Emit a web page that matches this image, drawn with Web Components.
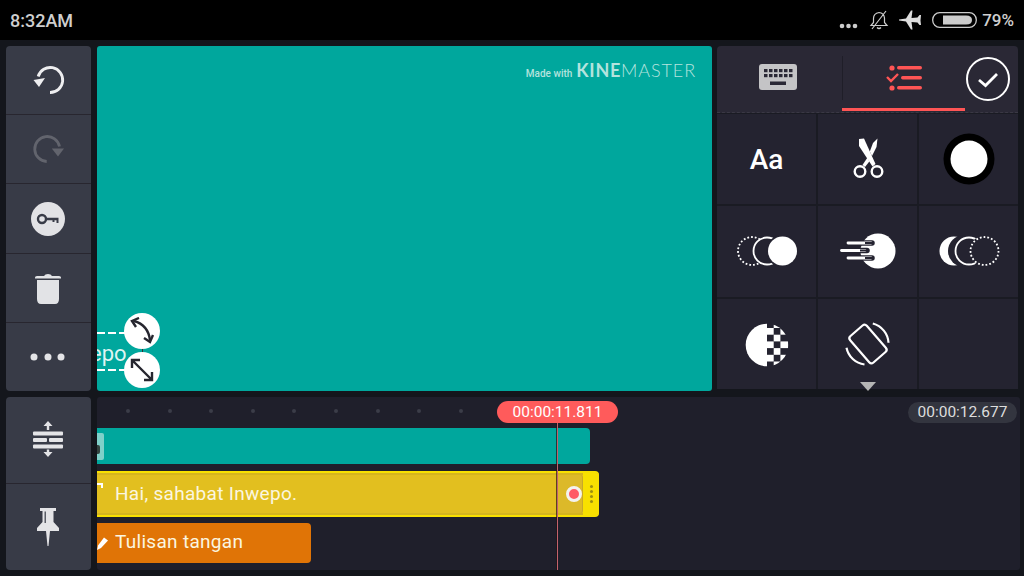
<!DOCTYPE html>
<html>
<head>
<meta charset="utf-8">
<title>KineMaster</title>
<style>
  html, body { margin: 0; padding: 0; background: #14161c; }
  body { width: 1024px; height: 576px; overflow: hidden; font-family: Roboto, "Liberation Sans", sans-serif; }
  svg { display: block; }
</style>
</head>
<body>

<km-app>
  <status-bar slot="status"></status-bar>

  <tool-rail slot="rail">
    <rail-button>
      <svg width="34" height="34" viewBox="0 0 34 34"><path d="M19 29.500A12.500 12.500 0 1 0 7.200 13.500" fill="none" stroke="#eeeef0" stroke-width="2.800"/><path d="M2.500 17L14 15L8 24Z" fill="#eeeef0"/></svg>
    </rail-button>
    <rail-button>
      <svg width="34" height="34" viewBox="0 0 34 34"><path d="M15.700 29.500A12.500 12.500 0 1 1 28.500 14.500" fill="none" stroke="#62646d" stroke-width="2.800"/><path d="M20.800 16.500L33 16.500L27 24.500Z" fill="#62646d"/></svg>
    </rail-button>
    <rail-button>
      <svg width="34" height="34" viewBox="0 0 34 34"><circle cx="17" cy="17" r="17" fill="#e2e2e5"/><circle cx="11" cy="17" r="4" fill="none" stroke="#383b47" stroke-width="2.400"/><path d="M15 15.800H27.500V21H25.500V18.200H23.500V20H21.500V18.200H15Z" fill="#383b47"/></svg>
    </rail-button>
    <rail-button>
      <svg width="28" height="32" viewBox="0 0 28 32"><path d="M1 5.500Q1 4 3 4H10Q11 2 14 2Q17 2 18 4H25Q27 4 27 5.500V6.500H1Z" fill="#e2e3e6"/><path d="M3 8H25V27Q25 32 21 32H7Q3 32 3 27Z" fill="#e2e3e6"/></svg>
    </rail-button>
    <rail-button>
      <svg width="36" height="8" viewBox="0 0 36 8"><circle cx="4" cy="4" r="3.500" fill="#e4e4e7"/><circle cx="18" cy="4" r="3.500" fill="#e4e4e7"/><circle cx="31" cy="4" r="3.500" fill="#e4e4e7"/></svg>
    </rail-button>
  </tool-rail>

  <preview-pane slot="preview"></preview-pane>

  <option-panel slot="options">
    <option-cell><span style="font:500 28px Roboto, sans-serif;color:#fff">Aa</span></option-cell>
    <option-cell>
      <svg width="32" height="42" viewBox="0 0 32 42"><g fill="none" stroke="#fff" stroke-width="2.400"><circle cx="8" cy="33.500" r="5.300"/><circle cx="25" cy="33.500" r="5.300"/></g><path d="M7 1L12 0.500L23.500 26L20.500 28.500L7 8Z" fill="#fff"/><path d="M25.500 0.500L24.500 9L20 18L17.800 13.500L21 5Z" fill="#fff"/><path d="M15.500 19.500L17.300 23.500L13 29L10.500 27Z" fill="#fff"/></svg>
    </option-cell>
    <option-cell>
      <svg width="52" height="52" viewBox="0 0 52 52"><circle cx="26" cy="26" r="25.500" fill="#000"/><circle cx="26" cy="26" r="18.500" fill="#fff"/></svg>
    </option-cell>
    <option-cell>
      <svg width="62" height="32" viewBox="0 0 62 32"><circle cx="16" cy="16" r="14" fill="none" stroke="#fff" stroke-width="1.800" stroke-dasharray="1.800 2"/><circle cx="31" cy="16" r="13.500" fill="#242330" stroke="#fff" stroke-width="1.800"/><circle cx="46" cy="16" r="16" fill="#242330"/><circle cx="46.500" cy="16" r="14.500" fill="#fff"/></svg>
    </option-cell>
    <option-cell>
      <svg width="56" height="38" viewBox="0 0 56 38"><circle cx="38" cy="19" r="17.500" fill="#fff"/><g stroke="#242330" stroke-width="5.500" stroke-linecap="round"><path d="M8 11H32"/><path d="M3 18.500H27"/><path d="M8 26H32"/></g><g stroke="#fff" stroke-width="2.800" stroke-linecap="round"><path d="M8 11H31"/><path d="M1.500 18.500H25"/><path d="M8 26H31"/></g><g stroke="#242330" stroke-width="2"><path d="M25 11H33"/><path d="M20 18.500H28"/><path d="M25 26H33"/></g></svg>
    </option-cell>
    <option-cell>
      <svg width="62" height="32" viewBox="0 0 62 32"><circle cx="16" cy="16" r="14.500" fill="#fff"/><circle cx="26" cy="16" r="16" fill="#242330"/><circle cx="31" cy="16" r="13.500" fill="#242330" stroke="#fff" stroke-width="1.800"/><circle cx="46" cy="16" r="15" fill="#242330"/><circle cx="46.500" cy="16" r="14" fill="#242330" stroke="#fff" stroke-width="1.800" stroke-dasharray="1.800 2"/></svg>
    </option-cell>
    <option-cell>
      <svg width="44" height="44" viewBox="0 0 44 44" style="margin-top:2px"><defs><clipPath id="alphaClip"><circle cx="22" cy="22" r="21.300"/></clipPath></defs><g clip-path="url(#alphaClip)" fill="#fff"><rect x="0" y="0" width="22" height="44"/><rect x="22" y="5" width="6.700" height="6.700"/><rect x="22" y="18.400" width="6.700" height="6.700"/><rect x="22" y="31.800" width="6.700" height="6.700"/><rect x="28.700" y="-1.700" width="6.700" height="6.700"/><rect x="28.700" y="11.700" width="6.700" height="6.700"/><rect x="28.700" y="25.100" width="6.700" height="6.700"/><rect x="28.700" y="38.500" width="6.700" height="6.700"/><rect x="35.400" y="5" width="8" height="6.700"/><rect x="35.400" y="18.400" width="8" height="6.700"/><rect x="35.400" y="31.800" width="8" height="6.700"/></g></svg>
    </option-cell>
    <option-cell>
      <svg width="46" height="46" viewBox="0 0 46 46"><rect x="12" y="5.500" width="22" height="35" rx="3" transform="rotate(-41 23 23)" fill="none" stroke="#fff" stroke-width="2.200"/><path d="M27.800 2.500A21 21 0 0 1 43.500 21.800" fill="none" stroke="#fff" stroke-width="2.200"/><path d="M19.500 43.500A21 21 0 0 1 1.500 26.800" fill="none" stroke="#fff" stroke-width="2.200"/></svg>
    </option-cell>
    <option-cell></option-cell>
  </option-panel>

  <tool-rail slot="rail2">
    <rail-button>
      <svg width="32" height="38" viewBox="0 0 32 38"><g fill="#e4e4e7"><path d="M16 0L20.500 5H17.200V9H14.800V5H11.500Z"/><rect x="1" y="10.500" width="30" height="4" rx="1"/><rect x="1" y="17" width="14" height="4" rx="1"/><rect x="17" y="17" width="14" height="4" rx="1"/><rect x="1" y="23.500" width="30" height="4" rx="1"/><path d="M16 36L20.500 31H17.200V28.500H14.800V31H11.500Z"/></g></svg>
    </rail-button>
    <rail-button>
      <svg width="24" height="38" viewBox="0 0 24 38"><path d="M4 0H20V3H17.500V14L23 20V23H14L12.500 38H11.500L10 23H1V20L6.500 14V3H4Z" fill="#e4e4e7"/><path d="M9.200 3.500V15" stroke="#383b47" stroke-width="1.200"/></svg>
    </rail-button>
  </tool-rail>

  <timeline-pane slot="timeline">
    <timeline-clip kind="video" width="493"></timeline-clip>
    <timeline-clip kind="text" width="502">Hai, sahabat Inwepo.</timeline-clip>
    <timeline-clip kind="hand" width="214">Tulisan tangan</timeline-clip>
  </timeline-pane>
</km-app>

<script>
class KmApp extends HTMLElement {
    constructor() {
        super();
        this.shadowDom = this.attachShadow({ mode: 'open' });
        this.shadowDom.innerHTML = `
        <style>
            :host { display: flex; flex-direction: column; width: 1024px; height: 576px; }
            .body {
                display: grid;
                grid-template-columns: 85px 615px 301px;
                grid-template-rows: 345px 173px;
                column-gap: 6px;
                row-gap: 6px;
                padding: 6px;
            }
            .options { margin-left: -1px; width: 301px; }
            .timeline { grid-column: 2 / 4; margin-right: -1px; }
        </style>
        <slot name="status"></slot>
        <div class="body">
            <div><slot name="rail"></slot></div>
            <div><slot name="preview"></slot></div>
            <div class="options"><slot name="options"></slot></div>
            <div><slot name="rail2"></slot></div>
            <div class="timeline"><slot name="timeline"></slot></div>
        </div>
        `;
    }
}

class StatusBar extends HTMLElement {
    constructor() {
        super();
        this.shadowDom = this.attachShadow({ mode: 'open' });
        this.shadowDom.innerHTML = `
        <style>
            :host {
                display: flex; align-items: center; height: 40px; background: #000;
                padding: 0 10px; box-sizing: border-box; color: #cfcfcf;
                font: 500 17px Roboto, sans-serif;
            }
            .clock { font-size: 18px; }
            .right { margin-left: auto; display: flex; align-items: center; }
            .pct { margin-left: 5px; }
            svg { display: block; }
        </style>
        <span class="clock">8:32AM</span>
        <div class="right">
            <svg width="19" height="6" viewBox="0 0 19 6" style="margin-top:12px"><circle cx="3" cy="3" r="2.300" fill="#ccc"/><circle cx="9.500" cy="3" r="2.300" fill="#ccc"/><circle cx="16" cy="3" r="2.300" fill="#ccc"/></svg>
            <svg width="20" height="20" viewBox="0 0 20 20" style="margin-left:11px"><path d="M2 15.500L4.500 12.500V8.500Q4.500 3.500 10 2.500Q15 3 15.500 8V12.500L18 15.500ZM8 17.500Q10 19.500 12 17.500M3 19L17 1" fill="none" stroke="#ccc" stroke-width="1.200"/></svg>
            <svg width="23" height="20" viewBox="0 0 23 20" style="margin-left:10px"><path d="M0 9.500L7 8.500L12 0.500H13.500L12.500 8L18.500 7.500L20.500 5H22L21.500 10.500L22 15H20.500L18.500 12.500L12.500 12L13.500 19.500H12L7 11.500L0 10.500Z" fill="#ddd"/></svg>
            <svg width="45" height="16" viewBox="0 0 45 16" style="margin-left:10px"><rect x="0.700" y="0.700" width="43.600" height="14.600" rx="7" fill="none" stroke="#ccc" stroke-width="1.300"/><path d="M11 3.500H34Q40 3.500 40 8Q40 12.500 34 12.500H11Z" fill="#ccc"/></svg>
            <span class="pct">79%</span>
        </div>
        `;
    }
}

class ToolRail extends HTMLElement {
    constructor() {
        super();
        this.shadowDom = this.attachShadow({ mode: 'open' });
        this.shadowDom.innerHTML = `
        <style>
            :host {
                display: flex; flex-direction: column; height: 100%; border-radius: 4px; overflow: hidden;
                background: #383b47;
            }
        </style>
        <slot></slot>
        `;
    }
}

class RailButton extends HTMLElement {
    constructor() {
        super();
        this.shadowDom = this.attachShadow({ mode: 'open' });
        this.shadowDom.innerHTML = `
        <style>
            :host {
                flex: 1; display: flex; align-items: center; justify-content: center;
                border-bottom: 1px solid #28262f; box-sizing: border-box; padding-right: 1px;
            }
            :host(:last-child) { border-bottom: 0; }
        </style>
        <slot></slot>
        `;
    }
}

class PreviewPane extends HTMLElement {
    constructor() {
        super();
        this.shadowDom = this.attachShadow({ mode: 'open' });
        this.shadowDom.innerHTML = `
        <style>
            :host {
                display: block; position: relative; height: 100%; overflow: hidden;
                background: #00a79d; border-radius: 3px;
                font-family: Roboto, sans-serif;
            }
            .mark {
                position: absolute; right: 16px; top: 13px; display: flex; align-items: baseline;
                color: #b4e3de; white-space: nowrap;
            }
            .made { font: 500 10px Roboto, sans-serif; margin-right: 4px; }
            .kine { font: 700 18px Lato, sans-serif; letter-spacing: .7px; }
            .master { font: 300 18px Lato, sans-serif; letter-spacing: .9px; }
            .txt { position: absolute; left: -7px; top: 295px; font-size: 22px; color: #dff4f2; white-space: nowrap; }
            .dash {
                position: absolute; left: 0; width: 30px; height: 2px;
                background: repeating-linear-gradient(90deg, #fff 0 8px, transparent 8px 11px);
            }
            .stem { position: absolute; left: 45px; top: 300px; height: 24px; border-left: 1px solid #333; }
            .handle {
                position: absolute; left: 27px; width: 36px; height: 36px; border-radius: 50%;
                background: #fff; display: flex; align-items: center; justify-content: center;
            }
        </style>
        <div class="mark"><span class="made">Made with</span><span class="kine">KINE</span><span class="master">MASTER</span></div>
        <span class="txt">epo</span>
        <div class="dash" style="top:286px"></div>
        <div class="dash" style="top:323px"></div>
        <div class="stem"></div>
        <div class="handle" style="top:267px">
            <svg width="26" height="28" viewBox="0 0 26 28"><path d="M5 4Q19 8 21 23" fill="none" stroke="#26262f" stroke-width="2.400"/><path d="M10 1L3 4L7 10M15 21L21 25L24 18" fill="none" stroke="#26262f" stroke-width="2.400"/></svg>
        </div>
        <div class="handle" style="top:306px">
            <svg width="26" height="26" viewBox="0 0 26 26"><path d="M4 4L22 22M3 11V3H11M23 15V23H15" fill="none" stroke="#26262f" stroke-width="2.400"/></svg>
        </div>
        `;
    }
}

class OptionPanel extends HTMLElement {
    constructor() {
        super();
        this.shadowDom = this.attachShadow({ mode: 'open' });
        this.shadowDom.innerHTML = `
        <style>
            :host { display: flex; flex-direction: column; height: 343px; position: relative; }
            .tabs {
                display: flex; height: 66px; background: #2a2835; border-radius: 4px 4px 0 0;
                border-bottom: 1px dashed #3a3844; box-sizing: content-box; position: relative;
            }
            .tab { display: flex; align-items: center; justify-content: center; box-sizing: border-box; }
            .kb { width: 125px; padding-right: 3px; margin-top: -1px; }
            .kb svg { margin-top: -4px; }
            .list { width: 123px; border-left: 1px solid #1f1e28; height: 44px; margin-top: 10px; position: relative; }
            .line { width: 123px; height: 3px; background: #ff5555; position: absolute; left: 125px; top: 62px; }
            .ok { position: absolute; left: 249px; top: 11px; width: 44px; height: 44px; }
            .grid {
                display: grid; grid-template-columns: repeat(3, 1fr); grid-auto-rows: 1fr; gap: 2px;
                flex: 1; padding-top: 1px; background: #1a1b23;
            }
            .more {
                position: absolute; left: 143px; bottom: -2px; width: 0; height: 0;
                border-left: 8.500px solid transparent; border-right: 8.500px solid transparent;
                border-top: 9px solid #b5b5b5;
            }
            svg { display: block; }
        </style>
        <div class="tabs">
            <div class="tab kb">
                <svg width="38" height="26" viewBox="0 0 38 26"><rect width="38" height="26" rx="3" fill="#c4c4c6"/><g fill="#2a2835"><rect x="5" y="5" width="3.500" height="3.200"/><rect x="10" y="5" width="3.500" height="3.200"/><rect x="15" y="5" width="3.500" height="3.200"/><rect x="20" y="5" width="3.500" height="3.200"/><rect x="25" y="5" width="3.500" height="3.200"/><rect x="30" y="5" width="3.500" height="3.200"/><rect x="5" y="10" width="3.500" height="3.200"/><rect x="10" y="10" width="3.500" height="3.200"/><rect x="15" y="10" width="3.500" height="3.200"/><rect x="20" y="10" width="3.500" height="3.200"/><rect x="25" y="10" width="3.500" height="3.200"/><rect x="30" y="10" width="3.500" height="3.200"/><rect x="11" y="17.500" width="16" height="3.500"/></g></svg>
            </div>
            <div class="tab list">
                <svg width="36" height="26" viewBox="0 0 36 26"><g fill="#ff5555"><circle cx="6" cy="3" r="2.600"/><rect x="11" y="1" width="25" height="3.400" rx="1.700"/><rect x="15" y="11" width="21" height="3.400" rx="1.700"/><circle cx="6" cy="23" r="2.600"/><rect x="11" y="21" width="25" height="3.400" rx="1.700"/></g><path d="M1 12L5 16L12 9" fill="none" stroke="#ff5555" stroke-width="2.400"/></svg>
            </div>
            <div class="line"></div>
            <svg class="ok" viewBox="0 0 44 44"><circle cx="22" cy="22" r="21" fill="none" stroke="#fff" stroke-width="2"/><path d="M13 23L19.500 28.500L31 17" fill="none" stroke="#fff" stroke-width="2.800"/></svg>
        </div>
        <div class="grid"><slot></slot></div>
        <div class="more"></div>
        `;
    }
}

class OptionCell extends HTMLElement {
    constructor() {
        super();
        this.shadowDom = this.attachShadow({ mode: 'open' });
        this.shadowDom.innerHTML = `
        <style>
            :host {
                display: flex; align-items: center; justify-content: center; background: #242330;
                min-width: 0; min-height: 0;
            }
        </style>
        <slot></slot>
        `;
    }
}

class TimelinePane extends HTMLElement {
    constructor() {
        super();
        this.shadowDom = this.attachShadow({ mode: 'open' });
        this.shadowDom.innerHTML = `
        <style>
            :host {
                display: block; position: relative; height: 100%; overflow: hidden;
                background: #1f1f2b; border-radius: 3px; font-family: Roboto, sans-serif;
            }
            .ruler { display: flex; gap: 37.600px; height: 31px; padding: 12px 0 0 29px; box-sizing: border-box; }
            .ruler i { width: 4px; height: 4px; border-radius: 50%; background: #3b3d48; }
            .clips { display: flex; flex-direction: column; }
            .time {
                position: absolute; top: 4px; height: 22px; border-radius: 11px; color: #fff;
                font-size: 15.500px; line-height: 22px; text-align: center;
            }
            .now { left: 400px; width: 121px; background: #ff5b5b; }
            .end { left: 811px; width: 109px; background: #33353f; color: #ddd; top: 5px; height: 21px; line-height: 21px; }
            .playhead { position: absolute; left: 460px; top: 26px; bottom: 0; width: 1px; background: #c4626c; box-shadow: -1px 0 rgba(30,20,25,.7); }
        </style>
        <div class="ruler"><i></i><i></i><i></i><i></i><i></i><i></i><i></i><i></i><i></i></div>
        <div class="clips"><slot></slot></div>
        <div class="playhead"></div>
        <div class="time now">00:00:11.811</div>
        <div class="time end">00:00:12.677</div>
        `;
    }
}

class TimelineClip extends HTMLElement {
    constructor() {
        super();
        this.shadowDom = this.attachShadow({ mode: 'open' });
        let kind = this.getAttribute('kind');
        let width = this.getAttribute('width');
        let extra = '';
        if (kind == 'video') {
            extra = `<span class="thumb"></span><span class="glyph"></span>`;
        } else if (kind == 'text') {
            extra = `<svg class="tag" width="6" height="8" viewBox="0 0 6 8"><path d="M0 0H6V5H4V2H0Z" fill="#fff"/></svg>
                     <div class="trim"><div class="rec"></div></div>
                     <div class="grip"><i></i><i></i><i></i><i></i></div>`;
        } else {
            extra = `<svg class="tag" width="11" height="14" viewBox="0 0 11 14"><path d="M0 14L1 9.500L7 1.500L11 4.500L4 12Z" fill="#fff"/></svg>`;
        }

        this.shadowDom.innerHTML = `
        <style>
            :host { display: block; width: ${width}px; box-sizing: border-box; position: relative; border-radius: 0 4px 4px 0; overflow: hidden; color: #fff; }
            :host([kind=video]) { height: 36px; background: #00a79d; margin-bottom: 7px; }
            :host([kind=text]) {
                height: 46px; background: #e2bf1f; margin-bottom: 5.500px;
                border-top: 2px solid #f8e000; border-bottom: 2px solid #f8e000;
                box-shadow: inset 0 2px #d5b420, inset 0 -2px #d5b420;
            }
            :host([kind=hand]) { height: 40px; background: #e07406; }
            .label { position: absolute; left: 18px; top: 0; bottom: 2px; display: flex; align-items: center; font-size: 19px; white-space: nowrap; letter-spacing: .3px; color: #fbf6e0; }
            .thumb { position: absolute; left: 0; top: 5px; width: 7px; height: 27px; background: #7fd0c9; border-radius: 0 2px 2px 0; }
            .glyph { position: absolute; left: 0; top: 17px; width: 3px; height: 9px; background: #33433f; border-radius: 0 2px 2px 0; }
            .tag { position: absolute; left: 0; top: 13px; }
            :host([kind=text]) .tag { top: 10px; }
            .trim { position: absolute; left: 460px; top: 2px; bottom: 2px; width: 26px; background: #dcb929; border-left: 1px dashed #5a4a20; border-right: 1px solid #c7a82a; border-radius: 0 3px 3px 0; box-sizing: border-box; }
            .rec { position: absolute; left: 8px; top: 11px; width: 10px; height: 10px; border-radius: 50%; background: #ff5a64; border: 3.500px solid #f3f2ee; }
            .grip { position: absolute; left: 486px; right: 0; top: 0; bottom: 0; background: #f8e000; display: flex; flex-direction: column; align-items: center; justify-content: center; gap: 2px; }
            .grip i { width: 3px; height: 3px; border-radius: 50%; background: #9c8f10; }
        </style>
        ${extra}
        <div class="label"><slot></slot></div>
        `;
    }
}

window.customElements.define('km-app', KmApp);
window.customElements.define('status-bar', StatusBar);
window.customElements.define('tool-rail', ToolRail);
window.customElements.define('rail-button', RailButton);
window.customElements.define('preview-pane', PreviewPane);
window.customElements.define('option-panel', OptionPanel);
window.customElements.define('option-cell', OptionCell);
window.customElements.define('timeline-pane', TimelinePane);
window.customElements.define('timeline-clip', TimelineClip);
</script>
</body>
</html>
